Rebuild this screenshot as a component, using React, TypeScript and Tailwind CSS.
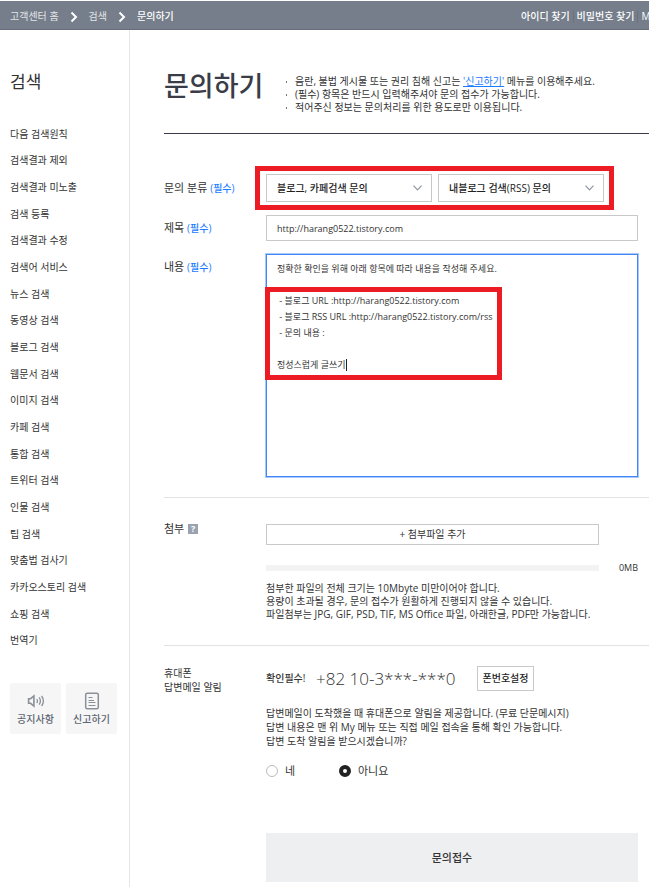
import { useState } from 'react';

const MENU = [
  '다음 검색원칙',
  '검색결과 제외',
  '검색결과 미노출',
  '검색 등록',
  '검색결과 수정',
  '검색어 서비스',
  '뉴스 검색',
  '동영상 검색',
  '블로그 검색',
  '웹문서 검색',
  '이미지 검색',
  '카페 검색',
  '통합 검색',
  '트위터 검색',
  '인물 검색',
  '팁 검색',
  '맞춤법 검사기',
  '카카오스토리 검색',
  '쇼핑 검색',
  '번역기',
];

const MESSAGE = `정확한 확인을 위해 아래 항목에 따라 내용을 작성해 주세요.

 - 블로그 URL :http://harang0522.tistory.com
 - 블로그 RSS URL :http://harang0522.tistory.com/rss
 - 문의 내용 :

정성스럽게 글쓰기`;

function Arrow() {
  return (
    <svg className="h-3 w-2 text-white" viewBox="0 0 8 12" fill="none" stroke="currentColor" strokeWidth="2">
      <path d="M1.5 1.5 6 6 1.5 10.5" />
    </svg>
  );
}

function Required() {
  return <span className="text-[10px] font-medium text-[#1a7cff]">(필수)</span>;
}

function Select({ label, value, className }: { label: string; value: string; className: string }) {
  return (
    <div className={`relative ${className}`}>
      <select
        aria-label={label}
        className="h-7 w-full appearance-none rounded-none border border-[#c9c9c9] bg-white px-[10px] text-[10px] font-medium text-[#222]"
      >
        <option>{value}</option>
      </select>
      <svg className="pointer-events-none absolute top-[11px] right-[10px] h-[6px] w-[9px]" viewBox="0 0 9 6" fill="none" stroke="#8f97a3" strokeWidth="1.2">
        <path d="M.5.7 4.5 4.9 8.5.7" />
      </svg>
    </div>
  );
}

export default function App() {
  const [title, setTitle] = useState('http://harang0522.tistory.com');
  const [message, setMessage] = useState(MESSAGE);
  const [alarm, setAlarm] = useState('no');

  return (
    <div className="overflow-hidden bg-white pt-px font-['Open_Sans','Noto_Sans_CJK_KR',sans-serif] text-[10px] leading-[13px] text-[#333]">
      {/* Breadcrumb bar */}
      <header className="flex h-[29px] items-center border-b border-[#656e7a] bg-[#757e8a] pt-[3px] pl-[10px] whitespace-nowrap text-white">
        <nav className="flex flex-1 items-center gap-[11px]">
          <a href="#home" className="text-[#e3e5e8]">고객센터 홈</a>
          <Arrow />
          <a href="#search" className="text-[#e3e5e8]">검색</a>
          <Arrow />
          <a href="#ask" className="font-medium">문의하기</a>
        </nav>
        <nav className="flex w-32 items-center overflow-hidden font-medium">
          <a href="#id">아이디 찾기</a>
          <span className="mx-[3px] h-3 w-px shrink-0 bg-[#6a727e]" />
          <a href="#pw">비밀번호 찾기</a>
          <span className="mx-[3px] h-3 w-px shrink-0 bg-[#6a727e]" />
          <a href="#my">My</a>
        </nav>
      </header>

      <div className="flex">
        {/* Side menu */}
        <aside className="w-[130px] shrink-0 border-r border-[#e6e6e6] pl-[10px]">
          <h2 className="mt-10 text-[17px] leading-6">검색</h2>
          <ul className="mt-[27px] grid h-[533px]">
            {MENU.map((item) => (
              <li key={item} className="flex items-center">
                <a href="#menu">{item}</a>
              </li>
            ))}
          </ul>
          <div className="mt-[29px] flex gap-[5px] text-[#5d6673]">
            <a href="#notice" className="flex h-[51px] w-[51px] flex-col items-center rounded-xs bg-[#f6f6f6] pt-[9px]">
              <svg className="h-[18px] w-[18px]" viewBox="0 0 18 18" fill="none" stroke="#8b9099" strokeWidth="1.6">
                <path d="M1.6 6.7h2L6.900 4v10l-3.300-2.700h-2z" />
                <path d="M9.800 7q1.300 2 0 4M12.200 5.400q2.400 3.600 0 7.200M14.600 4q3.600 5 0 10" strokeWidth="1.3" />
              </svg>
              <span className="mt-[3px] font-medium">공지사항</span>
            </a>
            <a href="#report" className="flex h-[51px] w-[51px] flex-col items-center rounded-xs bg-[#f6f6f6] pt-[9px]">
              <svg className="h-[18px] w-[18px]" viewBox="0 0 18 18" fill="none" stroke="#8b9099" strokeWidth="1.5">
                <rect x="2.7" y="1.2" width="12.6" height="15.6" rx="1.5" />
                <path d="M5.500 5.500h4M5.500 8.500h5.500M5.500 10.500h7M5.500 13.500h7" strokeWidth="1" />
              </svg>
              <span className="mt-[3px] font-medium">신고하기</span>
            </a>
          </div>
        </aside>

        <main className="min-w-0 flex-1 pl-[34px]">
          <div className="flex h-[104px] items-start border-b border-[#3a3a48] pt-[38px]">
            <h1 className="w-[119px] shrink-0 text-[27px] leading-9 font-medium whitespace-nowrap text-[#3a3d47]">문의하기</h1>
            <ul className="mt-[7px] whitespace-nowrap">
              {[
                <>음란, 불법 게시물 또는 권리 침해 신고는 <a href="#report" className="text-[#1a7cff] underline">'신고하기'</a> 메뉴를 이용해주세요.</>,
                <>(필수) 항목은 반드시 입력해주셔야 문의 접수가 가능합니다.</>,
                <>적어주신 정보는 문의처리를 위한 용도로만 이용됩니다.</>,
              ].map((text, i) => (
                <li key={i} className="flex items-center gap-2">
                  <span className="ml-[3px] h-[2px] w-px bg-[#777]" />
                  <span>{text}</span>
                </li>
              ))}
            </ul>
          </div>

          <form onSubmit={(e) => e.preventDefault()}>
            {/* Category, title and message */}
            <section className="border-b border-[#e3e3e3] pt-8 pb-5">
              <div className="flex items-center">
                <div className="w-[91px] shrink-0 text-[11px]">문의 분류 <Required /></div>
                <div className="flex h-11 w-[359px] gap-[6px] border-[5px] border-[#ed1c24] p-[3px] pl-[6px]">
                  <Select label="문의 분류" value="블로그, 카페검색 문의" className="w-[166px]" />
                  <Select label="상세 분류" value="내블로그 검색(RSS) 문의" className="w-[166px]" />
                </div>
              </div>
              <div className="mt-[5px] flex items-center pr-[11px]">
                <label htmlFor="title" className="w-[102px] shrink-0 text-[11px]">제목 <Required /></label>
                <input
                  id="title"
                  value={title}
                  onChange={(e) => setTitle(e.target.value)}
                  className="h-[26px] min-w-0 flex-1 border border-[#c9c9c9] px-[10px] text-[9px]"
                />
              </div>
              <div className="mt-[13px] flex items-start pr-[11px]">
                <label htmlFor="message" className="mt-[6px] w-[102px] shrink-0 text-[11px]">내용 <Required /></label>
                <div className="relative flex min-w-0 flex-1">
                  <textarea
                    id="message"
                    value={message}
                    onChange={(e) => setMessage(e.target.value)}
                    className="h-[223px] w-full resize-none border border-[#4285f4] px-[10px] py-[6px] text-[9px] leading-4 ring-1 ring-[#a9c8fb] outline-none"
                  />
                  {/* Text cursor */}
                  <span className="pointer-events-none absolute top-[105px] left-[80px] h-3 w-px bg-[#222]" />
                  <div className="pointer-events-none absolute top-[33px] left-[-1px] h-[93px] w-[237px] border-[5px] border-[#ed1c24]" />
                </div>
              </div>
            </section>

            {/* Attachment */}
            <section className="flex items-start border-b border-[#e3e3e3] pt-6 pb-6">
              <div className="flex w-[102px] shrink-0 items-center gap-1 text-[11px]">
                첨부
                <button type="button" className="flex h-[10px] w-[10px] items-center justify-center bg-[#9aa1af] text-[9px] font-bold text-white">?</button>
              </div>
              <div className="min-w-0 flex-1 pt-[2px] pr-[11px]">
                <button type="button" className="flex h-[21px] w-[calc(100%-39px)] items-center justify-center border border-[#c9c9c9]">
                  + 첨부파일 추가
                </button>
                <div className="mt-4 flex items-center justify-between">
                  <div className="h-[6px] w-[calc(100%-39px)] bg-[#f3f3f3]" />
                  <span className="text-[9px]">0MB</span>
                </div>
                <p className="mt-2">
                  첨부한 파일의 전체 크기는 10Mbyte 미만이어야 합니다.<br />
                  용량이 초과될 경우, 문의 접수가 원활하게 진행되지 않을 수 있습니다.<br />
                  파일첨부는 JPG, GIF, PSD, TIF, MS Office 파일, 아래한글, PDF만 가능합니다.
                </p>
              </div>
            </section>

            {/* Phone notification */}
            <section className="flex items-start pt-5 pb-[5px]">
              <div className="w-[102px] shrink-0 text-[10px] leading-[14px]">휴대폰<br />답변메일 알림</div>
              <div className="min-w-0 flex-1 pr-[11px]">
                <div className="flex items-center whitespace-nowrap">
                  <strong className="w-[50px] font-medium">확인필수!</strong>
                  <span className="w-[161px] text-[17px] font-light">+82 10-3***-***0</span>
                  <button type="button" className="h-[25px] w-[57px] border border-[#c9c9c9] font-medium text-[#222]">폰번호설정</button>
                </div>
                <p className="mt-[15px] leading-[14px]">
                  답변메일이 도착했을 때 휴대폰으로 알림을 제공합니다. (무료 단문메시지)<br />
                  답변 내용은 맨 위 My 메뉴 또는 직접 메일 접속을 통해 확인 가능합니다.<br />
                  답변 도착 알림을 받으시겠습니까?
                </p>
                <div className="mt-4 flex text-[11px]">
                  {[['yes', '네'], ['no', '아니요']].map(([value, label]) => (
                    <label key={value} className="flex w-[73px] items-center gap-[7px]">
                      <input
                        type="radio"
                        name="alarm"
                        checked={alarm === value}
                        onChange={() => setAlarm(value)}
                        className="h-3 w-3 appearance-none rounded-full border border-[#bbb] bg-white checked:border-4 checked:border-[#222]"
                      />
                      {label}
                    </label>
                  ))}
                </div>
                <button type="submit" className="mt-14 h-[49px] w-full bg-[#eeeff1] text-[11px] font-medium">문의접수</button>
              </div>
            </section>
          </form>
        </main>
      </div>
    </div>
  );
}
